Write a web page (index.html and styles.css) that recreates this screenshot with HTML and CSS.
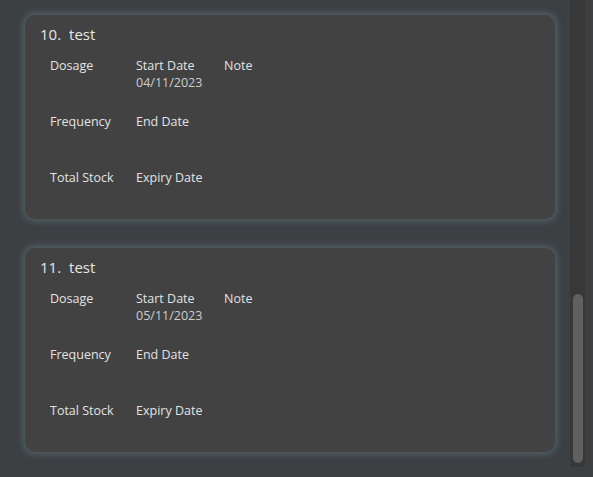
FILE: index.html
```html
<!DOCTYPE html>
<html>
<head>
<meta charset="utf-8">
<link rel="stylesheet" href="styles.css">
</head>
<body>
<div class="app">
  <div class="list">
    <div class="card">
      <div class="title"><span class="idx">10.</span><span>test</span></div>
      <div class="grid">
        <div class="cell"><div class="lbl">Dosage</div></div>
        <div class="cell"><div class="lbl">Start Date</div><div class="val">04/11/2023</div></div>
        <div class="cell"><div class="lbl">Note</div></div>
        <div class="cell"><div class="lbl">Frequency</div></div>
        <div class="cell"><div class="lbl">End Date</div></div>
        <div class="cell"></div>
        <div class="cell"><div class="lbl">Total Stock</div></div>
        <div class="cell"><div class="lbl">Expiry Date</div></div>
        <div class="cell"></div>
      </div>
    </div>
    <div class="card">
      <div class="title"><span class="idx">11.</span><span>test</span></div>
      <div class="grid">
        <div class="cell"><div class="lbl">Dosage</div></div>
        <div class="cell"><div class="lbl">Start Date</div><div class="val">05/11/2023</div></div>
        <div class="cell"><div class="lbl">Note</div></div>
        <div class="cell"><div class="lbl">Frequency</div></div>
        <div class="cell"><div class="lbl">End Date</div></div>
        <div class="cell"></div>
        <div class="cell"><div class="lbl">Total Stock</div></div>
        <div class="cell"><div class="lbl">Expiry Date</div></div>
        <div class="cell"></div>
      </div>
    </div>
  </div>
  <div class="scroll">
    <div class="thumb"></div>
  </div>
</div>
</body>
</html>
```

FILE: styles.css
```css
html, body {
  margin: 0;
  padding: 0;
  background: #3c4043;
  width: 593px;
  height: 477px;
  overflow: hidden;
  font-family: "Open Sans", "Noto Sans", sans-serif;
}
.app {
  display: flex;
  align-items: flex-start;
}
.list {
  width: 530px;
  padding: 15px 15px 0 25px;
  display: flex;
  flex-direction: column;
  gap: 29px;
}
.card {
  background: #424242;
  border-radius: 10px;
  box-shadow: 0 0 7px 2px rgba(110, 140, 150, 0.45);
  padding: 9px 0 16px 15px;
  color: #dcdcdc;
}
.title {
  font-size: 15px;
  line-height: 20px;
  display: flex;
  gap: 8px;
  color: #e6e6e6;
}
.grid {
  margin-top: 13px;
  padding-left: 10px;
  display: grid;
  grid-template-columns: 86px 88px 1fr;
  row-gap: 22px;
  font-size: 12.5px;
  line-height: 17px;
}
.cell {
  min-height: 34px;
}
.lbl {
  color: #e2e2e2;
}
.val {
  color: #cdcdcd;
}
.scroll {
  width: 15px;
  height: 467px;
  background: #383838;
  display: flex;
  flex-direction: column;
  justify-content: flex-end;
  align-items: center;
  padding-bottom: 4px;
  box-sizing: border-box;
}
.thumb {
  width: 10px;
  height: 169px;
  border-radius: 5px;
  background: #606060;
}
```
